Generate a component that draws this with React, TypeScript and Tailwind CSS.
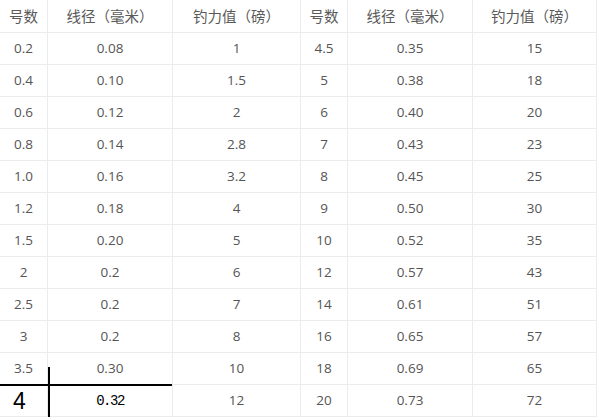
import React from 'react';

const rows = [
  ['0.2', '0.08', '1', '4.5', '0.35', '15'],
  ['0.4', '0.10', '1.5', '5', '0.38', '18'],
  ['0.6', '0.12', '2', '6', '0.40', '20'],
  ['0.8', '0.14', '2.8', '7', '0.43', '23'],
  ['1.0', '0.16', '3.2', '8', '0.45', '25'],
  ['1.2', '0.18', '4', '9', '0.50', '30'],
  ['1.5', '0.20', '5', '10', '0.52', '35'],
  ['2', '0.2', '6', '12', '0.57', '43'],
  ['2.5', '0.2', '7', '14', '0.61', '51'],
  ['3', '0.2', '8', '16', '0.65', '57'],
  ['3.5', '0.30', '10', '18', '0.69', '65'],
];

const last = ['20', '0.73', '72'];
const headers = ['号数', '线径（毫米）', '钓力值（磅）', '号数', '线径（毫米）', '钓力值（磅）'];

const cell = 'flex items-center justify-center border-r border-b border-[#e9edf0]';

const App: React.FC = () => {
  return (
    <div className="relative w-[600px] h-[417px] overflow-hidden bg-white font-['Open_Sans','Noto_Sans_CJK_SC',sans-serif]">
      <div className="grid grid-cols-[48px_125px_128px_47px_125px_124px] grid-rows-[33px_repeat(12,32px)]">
        {/* Header */}
        {headers.map((h, i) => (
          <div key={'h' + i} className={`${cell} text-[14.5px] text-[#5a5a5a] font-['Noto_Sans_CJK_SC',sans-serif]`}>
            {h}
          </div>
        ))}

        {/* Data rows */}
        {rows.map((r, ri) =>
          r.map((v, ci) => (
            <div key={ri + '-' + ci} className={`${cell} text-[13.5px] text-[#555]`}>
              {v}
            </div>
          ))
        )}

        {/* Last row, partly hand-edited */}
        <div className={`${cell} justify-start pl-[13px] pt-[2px] text-[23px] text-black font-['Liberation_Sans',sans-serif]`}>4</div>
        <div className={`${cell} pt-[2px] text-[14px] text-black font-['Liberation_Mono',monospace] tracking-[-1.5px]`}>0.32</div>
        <div className={`${cell} text-[13.5px] text-[#555]`}>12</div>
        {last.map((v, i) => (
          <div key={'l' + i} className={`${cell} text-[13.5px] text-[#555]`}>
            {v}
          </div>
        ))}
      </div>

      {/* black annotation lines */}
      <div className="absolute left-[48px] top-[367px] w-[2px] h-[50px] bg-black" />
      <div className="absolute left-0 top-[384px] w-[172px] h-[2px] bg-black" />
    </div>
  );
};

export default App;
